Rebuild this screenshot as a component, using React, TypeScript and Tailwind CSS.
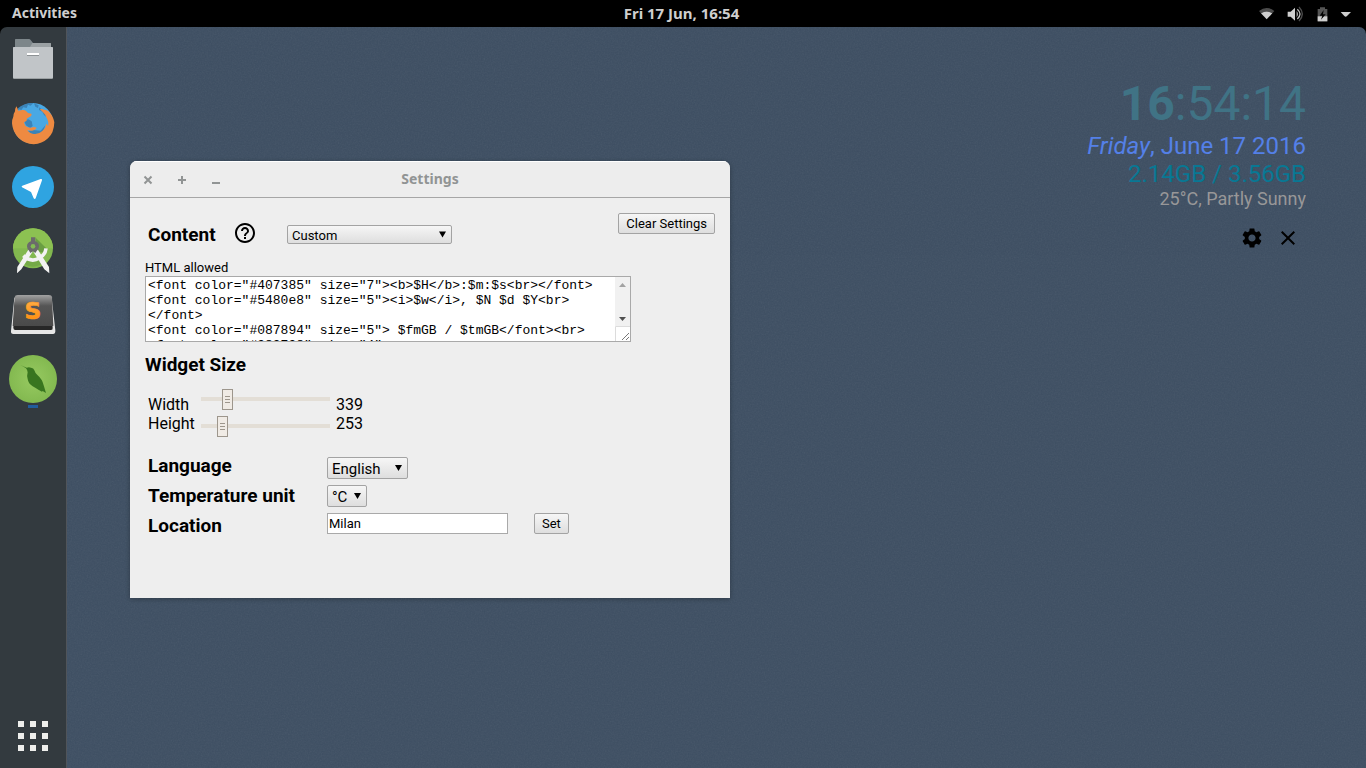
import React, { useState } from "react";
import { MdClose, MdHelpOutline, MdSettings } from "react-icons/md";

const template = `<font color="#407385" size="7"><b>$H</b>:$m:$s<br></font>
<font color="#5480e8" size="5"><i>$w</i>, $N $d $Y<br></font>
<font color="#087894" size="5"> $fmGB / $tmGB</font><br>
<font color="#989798" size="4">
$temp°C, $weather</font>`;

function TopBar() {
  return (
    <header className="grid h-[27px] shrink-0 grid-cols-3 items-center bg-black pr-[15px] pl-3 font-['Noto_Sans',sans-serif] font-bold text-[#cfcfcf]">
      <button type="button" className="justify-self-start pb-[2px] text-[14px] leading-[24px]">Activities</button>
      <button type="button" className="justify-self-center pb-[2px] text-[15px] leading-[24px] whitespace-nowrap">Fri 17 Jun, 16:54</button>
      <button type="button" aria-label="System menu" className="flex items-center justify-self-end">
        <svg width="94" height="20" viewBox="0 0 282 60" fill="#cfcfcf">
          <path d="M6 21Q29 3 52 21L46 28Q29 17 12 28Z" fill="#4b4b4b" />
          <path d="M12 28Q29 17 46 28L29 46Z" />
          <path d="M92 23h9l13-12v39l-13-12h-9z" />
          <path d="M119 21q7 9 0 19z" />
          <path d="M121 16q16 14 0 29" fill="none" stroke="#bdbdbd" strokeWidth="4" />
          <path d="M126 9q20 21 0 42" fill="none" stroke="#4b4b4b" strokeWidth="4" />
          <path d="M182 15h7v-5h15v5h7v37h-29z" fill="#555" />
          <path d="M182 37h29v15h-29z" />
          <path d="M200 18l-12 17h8l-4 12 14-16h-8z" fill="#000" />
          <path d="M251 24h31l-12 12q-4 4-8 0z" />
        </svg>
      </button>
    </header>
  );
}

function FilesIcon() {
  return (
    <svg className="size-12" viewBox="27 105 144 144">
      <path d="M45 119q0-2 2-2h40q3 0 5 3l7 9h52q2 0 2 3v12H45z" fill="#7d868a" />
      <path d="M97 129h54q2 0 2 3v9H90z" fill="#9ba1a4" />
      <rect x="39" y="141" width="120" height="96" rx="3" fill="#8f9597" />
      <rect x="39" y="141" width="120" height="94" rx="3" fill="#c1c5c8" />
      <path d="M81 165h36v3H81z" fill="#8d9295" />
      <path d="M81 159h36v6H81z" fill="#fff" />
    </svg>
  );
}

function FirefoxIcon() {
  return (
    <svg className="size-12" viewBox="27 297 144 144">
      <circle cx="99" cy="370" r="61" fill="#49a8e4" />
      <path d="M52 326q20-18 48-17l-8 8-8-3-4 10-10-2-6 8zM102 310l14 6-2 8-8-4zM118 322l16 14 4 14-6-5-5-10-10-5zM72 362l13-4 10 6 3 14-8 6-12-8zM82 394l18-4 22 2 14-16-8 22-26 8z" fill="#3b83b8" />
      <path d="M49 319q4 7 6 13l12-2q8-1 12 4l5 5 10 2q3 6-6 10l-8 5q2 5-2 8-4 1-6 4 2 10 12 14 8 3 16-1 8 0 10 4-6 7-14 7-8 0-14-2 6 11 19 12 15 2 26-9 11-10 12-22 4 3 5 8 3-15-5-27-3-9-10-15-4-5-10-9 6-3 14 1 7 1 12 5 15 14 18 33-1 32-19 48-18 17-43 18-26-1-45-19-18-18-20-44 0-13 4-20 0-8 5-16 0-8 4-15z" fill="#ee8a41" />
    </svg>
  );
}

function TelegramIcon() {
  return (
    <svg className="size-12" viewBox="27 489 144 144">
      <circle cx="99" cy="561" r="63" fill="#2fa4e1" />
      <path d="M67 557l55-20q5-1 4 4l-19 54q-3 4-6 0l-8-19-27-14q-3-3 1-5z" fill="#fff" />
    </svg>
  );
}

function AndroidStudioIcon() {
  return (
    <svg className="size-12" viewBox="27 36 144 144">
      <circle cx="99" cy="100" r="60" fill="#82b84f" />
      <path d="M39 100a60 60 0 0 1 120 0z" fill="#8cc152" />
      <path d="M107 68l32 32-2 14-30-6z" fill="#6a9e43" />
      <path d="M74 128q26 18 51 0l8 14q-35 26-68 0z" fill="#74a947" />
      <path d="M70 122q24 22 48 7 18-10 20-29" fill="none" stroke="#f2f2f2" strokeWidth="11" />
      <path d="M86 103l12 7-34 53-13 12 1-19zM113 103l-13 7 33 53 15 12-1-19z" fill="#f2f2f2" />
      <path d="M93 67h13v12q11 4 11 15 0 9-7 14l-4 6-7-5-8 5-4-7q-6-5-6-13 0-11 12-15z" fill="#6b6b6b" />
      <circle cx="99" cy="94" r="7" fill="#83bd55" />
    </svg>
  );
}

function SublimeIcon() {
  return (
    <svg className="size-12" viewBox="27 228 144 144">
      <defs>
        <linearGradient id="keycap" x1="0" y1="0" x2="0" y2="1">
          <stop offset="0" stopColor="#a2a2a2" />
          <stop offset=".35" stopColor="#555" />
          <stop offset="1" stopColor="#4a4a4a" />
        </linearGradient>
        <linearGradient id="keyletter" x1="0" y1="0" x2="0" y2="1">
          <stop offset="0" stopColor="#ffb253" />
          <stop offset="1" stopColor="#ff8800" />
        </linearGradient>
      </defs>
      <path d="M43 248h112l11 98q1 11-7 11H40q-8 0-7-9z" fill="#e6e6e6" />
      <path d="M44 262l-4 76q0 7 6 7h107q6 0 5-7l-5-76z" fill="#272727" />
      <path d="M53 240h93q9 0 10 7l4 86H38l6-86q1-7 9-7z" fill="url(#keycap)" />
      <text x="99" y="311" textAnchor="middle" fontFamily="DejaVu Sans, sans-serif" fontSize="70" fontWeight="700" fill="url(#keyletter)" stroke="#ff9a25" strokeWidth="2">S</text>
    </svg>
  );
}

function BirdIcon() {
  return (
    <svg className="size-12" viewBox="27 420 144 144">
      <defs>
        <radialGradient id="leaf">
          <stop offset="0" stopColor="#97ca61" />
          <stop offset="1" stopColor="#83b950" />
        </radialGradient>
      </defs>
      <circle cx="99" cy="492" r="72" fill="url(#leaf)" />
      <path d="M61 450l19 8q7-2 13 0 8 1 10 8 2 8 10 15 14 12 18 30l7 23-10-6-2 2q-12-6-19-11l-9-5q-13-8-15-22-3-10 0-20-1-8-5-12-8-6-17-10z" fill="#38751f" />
    </svg>
  );
}

function Dock() {
  const apps = [
    { name: "Files", icon: <FilesIcon /> },
    { name: "Firefox", icon: <FirefoxIcon /> },
    { name: "Telegram", icon: <TelegramIcon /> },
    { name: "Android Studio", icon: <AndroidStudioIcon /> },
    { name: "Sublime Text", icon: <SublimeIcon /> },
    { name: "Widget", icon: <BirdIcon />, running: true },
  ];
  return (
    <nav aria-label="Dock" className="flex w-[67px] shrink-0 flex-col items-center border-r border-[#50545a] bg-[#333a3f] pt-2 pb-[17px]">
      <div className="flex flex-col gap-4">
        {apps.map((app) => (
          <button key={app.name} type="button" aria-label={app.name} className="relative size-12">
            {app.icon}
            {app.running && <span className="absolute top-[50px] left-[19px] h-[3px] w-[10px] bg-[#215d9c]" />}
          </button>
        ))}
      </div>
      <button type="button" aria-label="Show applications" className="mt-auto grid grid-cols-3 gap-[6px]">
        {Array.from({ length: 9 }, (_, i) => (
          <span key={i} className="size-[6px] bg-[#eeeeec]" />
        ))}
      </button>
    </nav>
  );
}

function Picker({ id, label, options, className }: { id: string; label?: string; options: string[]; className: string }) {
  return (
    <div className="relative flex">
      <select
        id={id}
        aria-label={label}
        className={`appearance-none rounded-[2px] border border-[#a3a3a3] bg-linear-to-b from-[#f6f6f6] to-[#dedede] pl-1 text-black ${className}`}
      >
        {options.map((o) => (
          <option key={o}>{o}</option>
        ))}
      </select>
      <svg className="pointer-events-none absolute top-0 right-[6px] h-full w-[7px]" viewBox="0 0 7 7">
        <path d="M0 .5h7L3.500 6.500z" />
      </svg>
    </div>
  );
}

function Slider({ id, value, onChange }: { id: string; value: number; onChange: (v: number) => void }) {
  return (
    <input
      id={id}
      type="range"
      min={0}
      max={1920}
      value={value}
      onChange={(e) => onChange(Number(e.target.value))}
      className="h-[27px] w-full appearance-none bg-transparent [&::-webkit-slider-runnable-track]:h-1 [&::-webkit-slider-runnable-track]:bg-[#e3ded6] [&::-webkit-slider-thumb]:-mt-[8px] [&::-webkit-slider-thumb]:h-[21px] [&::-webkit-slider-thumb]:w-[11px] [&::-webkit-slider-thumb]:appearance-none [&::-webkit-slider-thumb]:border [&::-webkit-slider-thumb]:border-[#9d968c] [&::-webkit-slider-thumb]:bg-[#f0ebe5] [&::-webkit-slider-thumb]:bg-[repeating-linear-gradient(to_bottom,#9d968c_0_1px,transparent_1px_3px)] [&::-webkit-slider-thumb]:bg-[length:5px_7px] [&::-webkit-slider-thumb]:bg-center [&::-webkit-slider-thumb]:bg-no-repeat"
    />
  );
}

const buttonStyle = "h-[21px] rounded-[2px] border border-[#a3a3a3] bg-linear-to-b from-[#f6f6f6] to-[#dedede] px-[7px] text-[13px] leading-[19px]";
const headingStyle = "text-[19px] font-bold leading-[22px]";

function SettingsWindow() {
  const [text, setText] = useState(template);
  const [width, setWidth] = useState(339);
  const [height, setHeight] = useState(253);
  const [place, setPlace] = useState("Milan");
  return (
    <section aria-label="Settings" className="absolute top-[134px] left-[63px] w-[600px] overflow-hidden rounded-t-[7px] bg-[#eeeeee] text-black shadow-[0_1px_5px_rgba(0,0,0,0.3)]">
      <div className="grid h-[37px] grid-cols-3 items-center border-t border-b border-t-white border-b-[#a6a6a6] bg-[#ededed] px-[13px] text-[#919494]">
        <div className="flex gap-[24px]">
          <button type="button" aria-label="Close">
            <svg width="10" height="10" viewBox="0 0 10 10" stroke="currentColor" strokeWidth="2"><path d="M1.500 1.500l7 7M8.500 1.500l-7 7" /></svg>
          </button>
          <button type="button" aria-label="Maximize">
            <svg width="10" height="10" viewBox="0 0 10 10" stroke="currentColor" strokeWidth="2"><path d="M1 5h8M5 1v8" /></svg>
          </button>
          <button type="button" aria-label="Minimize">
            <svg width="10" height="10" viewBox="0 0 10 10" stroke="currentColor" strokeWidth="2"><path d="M1 8h8" /></svg>
          </button>
        </div>
        <h1 className="pb-[2px] text-center font-['Noto_Sans',sans-serif] text-[14px] font-bold">Settings</h1>
      </div>

      <div className="px-[15px] pt-[15px] pb-[57px]">
        <div className="flex h-[43px] items-center">
          <h2 className={`w-[85px] pl-[3px] ${headingStyle}`}>Content</h2>
          <button type="button" aria-label="Help" className="mr-[30px] ml-[3px] pb-1">
            <MdHelpOutline size={24} />
          </button>
          <Picker id="content" label="Content" options={["Custom", "Default"]} className="h-[19px] w-[165px] text-[13px]" />
          <button type="button" className={`ml-auto self-start ${buttonStyle}`}>Clear Settings</button>
        </div>

        <label htmlFor="markup" className="mt-1 block text-[13px] leading-[16px]">HTML allowed</label>
        <div className="flex h-[66px] w-[486px] border border-[#a9a9a9] bg-white">
          <textarea
            id="markup"
            value={text}
            onChange={(e) => setText(e.target.value)}
            spellCheck={false}
            className="min-w-0 flex-1 resize-none overflow-y-scroll px-[2px] pt-px font-['Liberation_Mono',monospace] text-[13px] leading-[15px] outline-none [scrollbar-width:none]"
          />
          <svg className="h-full w-[15px]" viewBox="0 0 15 64">
            <path d="M0 0h15v49H0z" fill="#f1f1f1" />
            <path d="M.5 64V49.500H15" fill="none" stroke="#dcdcdc" />
            <path d="M4 10l3.500-4 3.500 4z" fill="#a3a3a3" />
            <path d="M4 40h7l-3.500 4z" fill="#505050" />
            <path d="M7 63l7-7M11 63l3-3" stroke="#555" strokeWidth=".8" />
          </svg>
        </div>

        <h2 className={`mt-3 ${headingStyle}`}>Widget Size</h2>
        <div className="mt-[9px] flex items-center pl-[3px] text-[16px] leading-[19px]">
          <div className="flex w-[53px] flex-col pt-1">
            <label htmlFor="width">Width</label>
            <label htmlFor="height">Height</label>
          </div>
          <div className="flex w-[129px] flex-col">
            <Slider id="width" value={width} onChange={setWidth} />
            <Slider id="height" value={height} onChange={setHeight} />
          </div>
          <div className="ml-[6px] flex flex-col pt-1">
            <output htmlFor="width">{width}</output>
            <output htmlFor="height">{height}</output>
          </div>
        </div>

        <div className="mt-3 flex items-start pl-[3px]">
          <div className="flex w-[179px] flex-col text-[19px] font-bold leading-[30px]">
            <label htmlFor="language">Language</label>
            <label htmlFor="unit">Temperature unit</label>
            <label htmlFor="location">Location</label>
          </div>
          <div className="flex flex-col items-start gap-[6px] pt-[6px]">
            <Picker id="language" options={["English", "Italiano"]} className="h-[22px] w-[81px] pb-px text-[15px]" />
            <Picker id="unit" options={["°C", "°F"]} className="h-[22px] w-[40px] pb-px text-[15px]" />
            <div className="flex gap-[26px]">
              <input
                id="location"
                type="text"
                value={place}
                onChange={(e) => setPlace(e.target.value)}
                className="h-[21px] w-[181px] border border-[#a9a9a9] bg-white px-px text-[13px] outline-none"
              />
              <button type="button" className={buttonStyle}>Set</button>
            </div>
          </div>
        </div>
      </div>
    </section>
  );
}

function DesktopWidget() {
  return (
    <section aria-label="Clock widget" className="absolute top-[49px] right-[60px] text-right">
      <p className="text-[48px] leading-[56px] text-[#407385]"><b>16</b>:54:14</p>
      <p className="text-[24px] leading-[28px] text-[#5480e8]"><i>Friday</i>, June 17 2016</p>
      <p className="text-[24px] leading-[28px] text-[#087894]">2.14GB / 3.56GB</p>
      <p className="text-[18px] leading-[22px] text-[#989798]">25°C, Partly Sunny</p>
      <div className="mt-4 flex justify-end gap-3 pr-[6px] text-black">
        <button type="button" aria-label="Widget settings"><MdSettings size={24} /></button>
        <button type="button" aria-label="Close widget"><MdClose size={24} /></button>
      </div>
    </section>
  );
}

export default function App() {
  return (
    <div className="flex min-h-screen flex-col bg-black font-[Roboto,sans-serif]">
      <TopBar />
      <div className="flex flex-1 overflow-hidden rounded-t-[7px]">
        <Dock />
        <main className="relative min-h-[600px] flex-1 bg-[#3d4e62]">
          <svg aria-hidden="true" className="absolute inset-0 size-full opacity-8">
            <filter id="grain">
              <feTurbulence type="fractalNoise" baseFrequency="0.7" numOctaves="2" seed="4" />
              <feColorMatrix type="saturate" values="0" />
            </filter>
            <rect width="100%" height="100%" filter="url(#grain)" />
          </svg>
          <SettingsWindow />
          <DesktopWidget />
        </main>
      </div>
    </div>
  );
}
